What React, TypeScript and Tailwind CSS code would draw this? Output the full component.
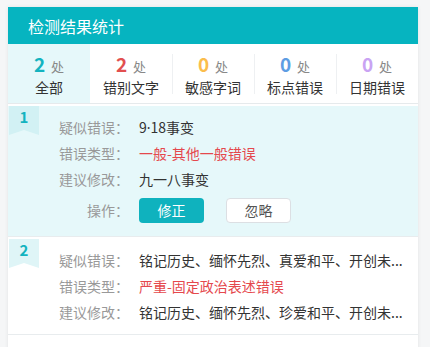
import React from "react";

type Stat = { count: number; label: string; color: string; active?: boolean };

const STATS: Stat[] = [
  { count: 2, label: "全部", color: "text-[#13b3bf]", active: true },
  { count: 2, label: "错别文字", color: "text-[#e24f4f]" },
  { count: 0, label: "敏感字词", color: "text-[#fbbd4c]" },
  { count: 0, label: "标点错误", color: "text-[#5d9de3]" },
  { count: 0, label: "日期错误", color: "text-[#c9a3f3]" },
];

type Issue = {
  id: number;
  suspect: React.ReactNode;
  kind: string;
  suggest: string;
  active?: boolean;
};

const ISSUES: Issue[] = [
  {
    id: 1,
    suspect: (
      <>
        9<span style={{ fontFamily: '"Noto Sans", sans-serif' }}>·</span>18事变
      </>
    ),
    kind: "一般-其他一般错误",
    suggest: "九一八事变",
    active: true,
  },
  {
    id: 2,
    suspect: "铭记历史、缅怀先烈、真爱和平、开创未...",
    kind: "严重-固定政治表述错误",
    suggest: "铭记历史、缅怀先烈、珍爱和平、开创未...",
  },
];

function Ribbon({ n, onWhite }: { n: number; onWhite?: boolean }) {
  return (
    <div className="absolute left-[1px] top-0 h-[29px] w-[30px]">
      <svg width="30" height="29" viewBox="0 0 30 29" className="absolute inset-0">
        <path d="M0 0 H30 V29 L15 24 L0 29 Z" fill={onWhite ? "#dff5f7" : "#d2f1f4"} />
      </svg>
      <span className="relative flex h-[22px] items-center justify-center text-[15px] font-bold text-[#13b3bf]">
        {n}
      </span>
    </div>
  );
}

function Row({ label, children }: { label: string; children: React.ReactNode }) {
  return (
    <div className="flex h-[26px] items-center">
      <span className="w-[121px] shrink-0 text-right text-[#999]">{label}</span>
      <span className="ml-[10px] min-w-0 flex-1 whitespace-nowrap">{children}</span>
    </div>
  );
}

function IssueCard({ issue }: { issue: Issue }) {
  return (
    <div
      className={`relative border-b border-[#e8ecee] pt-[8px] pr-[8px] ${
        issue.active ? "bg-[#e6f8fa] pb-[13px]" : "bg-white pb-[9px]"
      }`}
    >
      <Ribbon n={issue.id} onWhite={!issue.active} />
      <Row label="疑似错误：">
        <span className="text-[#333]">{issue.suspect}</span>
      </Row>
      <Row label="错误类型：">
        <span className="text-[#e5484d]">{issue.kind}</span>
      </Row>
      <Row label="建议修改：">
        <span className="text-[#333]">{issue.suggest}</span>
      </Row>
      {issue.active ? (
        <div className="mt-[5px] flex h-[26px] items-center">
          <span className="w-[121px] shrink-0 text-right text-[#999]">操作：</span>
          <button className="ml-[10px] h-[25px] w-[65px] rounded-[4px] bg-[#0fb2be] text-white">
            修正
          </button>
          <button className="ml-[22px] h-[25px] w-[65px] rounded-[4px] border border-[#dcdfe3] bg-white text-[#555]">
            忽略
          </button>
        </div>
      ) : null}
    </div>
  );
}

export default function App() {
  return (
    <div
      className="h-[347px] w-[430px] overflow-hidden bg-[#f5f6f7] pt-[7px] text-[14px]"
      style={{ fontFamily: '"Noto Sans CJK SC", "Noto Sans", sans-serif' }}
    >
      <div className="ml-[8px] h-[400px] w-[410px] bg-white shadow-[0_0_4px_rgba(0,0,0,0.08)]">
        <div className="flex h-[37px] items-center bg-[#06b4c0] pl-[20px] text-[16px] text-white">
          检测结果统计
        </div>

        <div className="flex h-[60px] border-b border-[#e6eaec]">
          {STATS.map((s, i) => (
            <div
              key={s.label}
              className={`relative flex flex-1 flex-col items-center justify-center pt-[4px] ${
                s.active ? "bg-[#e6f8fa]" : "bg-white"
              }`}
            >
              {i > 1 ? (
                <span className="absolute left-0 top-[10px] h-[40px] w-px bg-[#eef0f2]" />
              ) : null}
              <div className="flex items-baseline leading-[20px]">
                <span className={`text-[19px] font-bold ${s.color}`}>{s.count}</span>
                <span className="ml-[6px] text-[13px] text-[#888]">处</span>
              </div>
              <span className="leading-[20px] text-[#333]">{s.label}</span>
            </div>
          ))}
        </div>

        <div className="mt-[2px] flex flex-col gap-[2px]">
          {ISSUES.map((issue) => (
            <IssueCard key={issue.id} issue={issue} />
          ))}
        </div>
      </div>
    </div>
  );
}
